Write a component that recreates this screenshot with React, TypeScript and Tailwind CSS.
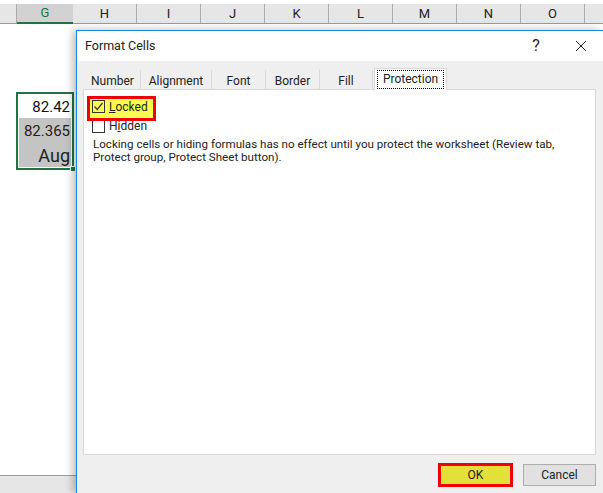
const columns = ["H", "I", "J", "K", "L", "M", "N", "O"];
const tabs = [
  { label: "Number", width: "w-[56px]" },
  { label: "Alignment", width: "w-[71px]" },
  { label: "Font", width: "w-[54px]" },
  { label: "Border", width: "w-[54px]" },
  { label: "Fill", width: "w-[53px]" },
];

function ColumnHeader({ label }: { label: string }) {
  return (
    <div className="flex h-full w-[64px] shrink-0 items-center justify-center border-r border-[#ababab] text-[13px] text-[#222]">
      {label}
    </div>
  );
}

function Sheet() {
  return (
    <div className="relative flex h-[493px] w-[603px] flex-col overflow-hidden bg-white">
      <div className="mt-[4px] flex h-[20px] shrink-0 border-b border-[#9b9b9b] bg-[#e6e6e6]">
        <div className="h-full w-[17px] shrink-0 border-r border-[#ababab]" />
        <div className="flex h-[20px] w-[56px] shrink-0 items-center justify-center border-b-2 border-[#217346] bg-[#d2d2d2] text-[13px] text-[#217346]">
          G
        </div>
        {columns.map((c) => (
          <ColumnHeader key={c} label={c} />
        ))}
      </div>
      <div className="flex-1 pt-[68px] pl-[16px]">
        <div className="relative flex h-[78px] w-[58px] flex-col border-2 border-[#217346] bg-white p-px">
          <div className="h-[23px] shrink-0 pr-px text-right text-[15px] leading-[24px] text-[#111]">82.42</div>
          <div className="flex flex-1 flex-col bg-[#c4c4c4] pr-px text-right text-[#222]">
            <div className="text-[15px] leading-[27px]">82.365</div>
            <div className="text-[18px] leading-[22px]">Aug</div>
          </div>
          <div className="absolute right-[-4px] bottom-[-4px] h-[6px] w-[6px] border border-white bg-[#217346]" />
        </div>
      </div>
      <div className="h-[18px] shrink-0 border-t border-[#9b9b9b] bg-[#e6e6e6]" />
      <Dialog />
    </div>
  );
}

function Dialog() {
  return (
    <div className="absolute top-[30px] left-[76px] flex h-[463px] w-[527px] flex-col border-t border-l border-[#1a86dc] bg-[#efefef] shadow-[-3px_0_8px_rgba(0,0,0,0.28)]">
      <div className="flex h-[30px] shrink-0 items-center justify-between bg-white pl-[8px] text-[12.5px] text-[#222]">
        <span>Format Cells</span>
        <div className="flex items-center">
          <span className="w-[16px] text-center text-[16px]">?</span>
          <svg className="mr-[17px] ml-[32px] h-[10px] w-[10px]" viewBox="0 0 10 10" fill="none" stroke="#222" strokeWidth="1">
            <path d="M0 0 10 10M10 0 0 10" />
          </svg>
        </div>
      </div>
      <div className="flex flex-1 flex-col pt-[7px] pr-[7px] pl-[6px]">
        <div className="relative z-10 mb-[-1px] flex h-[22px] items-end pl-[2px]">
          {tabs.map((t) => (
            <div
              key={t.label}
              className={`flex h-[20px] items-center justify-center border-r border-b border-[#d9d9d9] pt-[2px] text-[12px] text-[#222] ${t.width}`}
            >
              {t.label}
            </div>
          ))}
          <div className="ml-px flex h-[22px] w-[73px] items-center justify-center border-x border-t border-[#d9d9d9] bg-white">
            <span className="border border-dotted border-black px-[5px] text-[12px] leading-[17px] text-[#222]">
              Protection
            </span>
          </div>
        </div>
        <div className="h-[366px] border border-[#d9d9d9] bg-white pt-[6px] text-[12px] text-[#222]">
          <div className="relative z-10 ml-[3px] flex h-[25px] w-[69px] items-start border-[3px] border-[#f00000] bg-[#fdfd50] pt-px pl-[2px]">
            <span className="flex h-[13px] w-[13px] items-center justify-center border border-[#333]">
              <svg className="h-[11px] w-[11px]" viewBox="0 0 11 11" fill="none" stroke="#333" strokeWidth="1.2">
                <path d="M1.5 5.5 4.2 8.5 9.5 2" />
              </svg>
            </span>
            <span className="ml-[4px] leading-[14px]">
              <span className="underline">L</span>ocked
            </span>
          </div>
          <div className="mt-[-1px] ml-[8px] flex h-[13px] items-center">
            <span className="h-[13px] w-[13px] border border-[#333]" />
            <span className="ml-[4px] leading-[13px]">
              H<span className="underline">i</span>dden
            </span>
          </div>
          <p className="mt-[5px] ml-[9px] w-[490px] text-[11.6px] leading-[13px]">
            Locking cells or hiding formulas has no effect until you protect the worksheet (Review tab, Protect group, Protect Sheet button).
          </p>
        </div>
        <div className="mt-[8px] flex items-center justify-end gap-[10px]">
          <button className="h-[24px] w-[75px] border-[3px] border-[#f00000] bg-[#e3e03a] text-[12px] text-[#222]">OK</button>
          <button className="h-[22px] w-[73px] border border-[#adadad] bg-[#e1e1e1] text-[12px] text-[#222]">Cancel</button>
        </div>
      </div>
    </div>
  );
}

export default function App() {
  return (
    <div className="font-['Roboto','Liberation_Sans',sans-serif]">
      <Sheet />
    </div>
  );
}
